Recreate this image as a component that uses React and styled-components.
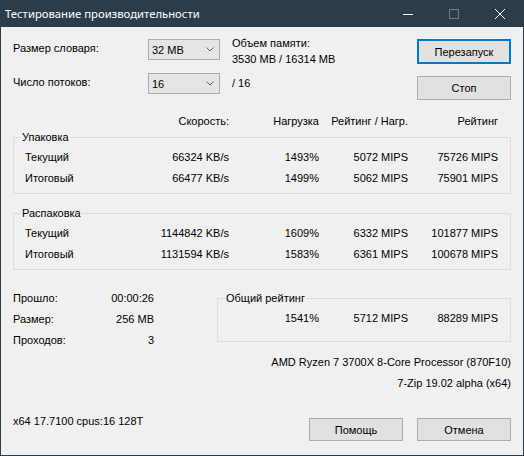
import React from 'react'
import styled, { createGlobalStyle } from 'styled-components'

const GlobalStyle = createGlobalStyle`
    html, body {
        margin: 0;
        padding: 0;
        background: #f0f0f0;
    }
    body {
        font-family: "Liberation Sans", Arial, sans-serif;
        font-size: 11px;
        color: #000;
    }
`

const Window = styled.div`
    width: 524px;
    height: 456px;
    box-sizing: border-box;
    border: 1px solid #2b3d4a;
    border-top: none;
    background: #f0f0f0;
    display: flex;
    flex-direction: column;
`

const TitleBar = styled.div`
    height: 27px;
    background: #2b3d4a;
    display: flex;
    align-items: center;
    color: #fff;
`

const Title = styled.div`
    flex: 1;
    padding-left: 4px;
    font-family: "Segoe UI", "Noto Sans", sans-serif;
    font-size: 11.3px;
`

const CaptionButton = styled.div`
    width: 46px;
    height: 27px;
    display: flex;
    align-items: center;
    justify-content: center;
`

const Body = styled.div`
    flex: 1;
    padding: 0 12px;
    display: flex;
    flex-direction: column;
`

const SettingRow = styled.div`
    display: grid;
    grid-template-columns: 135px 72px 1fr 94px;
    align-items: start;
    margin-top: ${p => p.$top}px;
`

const Label = styled.div`
    line-height: 16px;
    padding-top: ${p => p.$pad || 0}px;
`

const Combo = styled.div`
    height: 21px;
    box-sizing: border-box;
    margin-top: ${p => p.$top || 0}px;
    border: 1px solid #acacac;
    background: #e5e5e5;
    display: flex;
    align-items: center;
    justify-content: space-between;
    padding: 0 5px 0 3px;
`

const Info = styled.div`
    padding-left: 12px;
    line-height: 16px;
    padding-top: ${p => p.$pad || 0}px;
`

const Button = styled.div`
    height: ${p => p.$h || 23}px;
    box-sizing: border-box;
    margin-top: ${p => p.$top || 0}px;
    width: 94px;
    border: ${p => p.$primary ? '2px solid #0078d7' : '1px solid #adadad'};
    background: #e1e1e1;
    display: flex;
    align-items: center;
    justify-content: center;
`

const Cols = styled.div`
    display: grid;
    grid-template-columns: 100px 1fr 90px 89px 90px;
    line-height: ${p => p.$lh || 21}px;
    & > *:not(:first-child) {
        text-align: right;
    }
`

const Header = styled(Cols)`
    margin-top: 13px;
    padding: 0 13px 0 12px;
`

const Group = styled.fieldset`
    margin: ${p => p.$top || 0}px 0 0;
    padding: 2px 12px ${p => p.$bottom || 4}px 11px;
    border: 1px solid #dcdcdc;
    min-width: 0;
`

const Legend = styled.legend`
    padding: 0 1px;
    margin-left: -4px;
    line-height: 16px;
`

const Bottom = styled.div`
    display: flex;
    align-items: flex-start;
    margin-top: 18px;
`

const Stats = styled.div`
    width: 141px;
    display: grid;
    grid-template-columns: 1fr auto;
    line-height: 21px;
    & > :nth-child(even) {
        text-align: right;
    }
`

const Total = styled(Group)`
    margin: 2px 0 0 63px;
    flex: 1;
`

const TotalCols = styled.div`
    display: grid;
    grid-template-columns: 1fr 89px 90px;
    line-height: 21px;
    text-align: right;
`

const RightLine = styled.div`
    text-align: right;
    line-height: 21px;
    margin-top: ${p => p.$top || 0}px;
`

const Footer = styled.div`
    display: flex;
    align-items: flex-start;
    gap: 14px;
    margin-top: 19px;
`

const Version = styled.div`
    flex: 1;
    line-height: 16px;
`

const Chevron = () => (
    <svg width="8" height="5" viewBox="0 0 8 5">
        <path d="M0.5 0.5 L4 4 L7.5 0.5" fill="none" stroke="#606060" strokeWidth="1" />
    </svg>
)

const rows = {
    pack: [
        ['Текущий', '66324 KB/s', '1493%', '5072 MIPS', '75726 MIPS'],
        ['Итоговый', '66477 KB/s', '1499%', '5062 MIPS', '75901 MIPS'],
    ],
    unpack: [
        ['Текущий', '1144842 KB/s', '1609%', '6332 MIPS', '101877 MIPS'],
        ['Итоговый', '1131594 KB/s', '1583%', '6361 MIPS', '100678 MIPS'],
    ],
}

const Rows = ({ data }) => data.map(r => (
    <Cols key={r[0]}>
        {r.map((c, i) => <div key={i}>{c}</div>)}
    </Cols>
))

export default function App() {
    return (
        <Window>
            <GlobalStyle />
            <TitleBar>
                <Title>Тестирование производительности</Title>
                <CaptionButton>
                    <svg width="10" height="10" viewBox="0 0 10 10">
                        <path d="M0 5.5 H10" stroke="#fff" strokeWidth="1" />
                    </svg>
                </CaptionButton>
                <CaptionButton>
                    <svg width="10" height="10" viewBox="0 0 10 10">
                        <rect x="0.5" y="0.5" width="9" height="9" fill="none" stroke="#6f7e89" strokeWidth="1" />
                    </svg>
                </CaptionButton>
                <CaptionButton>
                    <svg width="10" height="10" viewBox="0 0 10 10">
                        <path d="M0 0 L10 10 M10 0 L0 10" stroke="#fff" strokeWidth="1" />
                    </svg>
                </CaptionButton>
            </TitleBar>
            <Body>
                <SettingRow $top={8}>
                    <Label $pad={5}>Размер словаря:</Label>
                    <Combo $top={4}>32 MB<Chevron /></Combo>
                    <Info>Объем памяти:<br />3530 MB / 16314 MB</Info>
                    <Button $primary $h={25} $top={4}>Перезапуск</Button>
                </SettingRow>
                <SettingRow $top={6}>
                    <Label $pad={1}>Число потоков:</Label>
                    <Combo>16<Chevron /></Combo>
                    <Info $pad={2}>/ 16</Info>
                    <Button $h={24} $top={3}>Стоп</Button>
                </SettingRow>
                <Header $lh={16}>
                    <div />
                    <div>Скорость:</div>
                    <div>Нагрузка</div>
                    <div>Рейтинг / Нагр.</div>
                    <div>Рейтинг</div>
                </Header>
                <Group>
                    <Legend>Упаковка</Legend>
                    <Rows data={rows.pack} />
                </Group>
                <Group $top={11}>
                    <Legend>Распаковка</Legend>
                    <Rows data={rows.unpack} />
                </Group>
                <Bottom>
                    <Stats>
                        <div>Прошло:</div><div>00:00:26</div>
                        <div>Размер:</div><div>256 MB</div>
                        <div>Проходов:</div><div>3</div>
                    </Stats>
                    <Total $bottom={12}>
                        <Legend>Общий рейтинг</Legend>
                        <TotalCols>
                            <div>1541%</div>
                            <div>5712 MIPS</div>
                            <div>88289 MIPS</div>
                        </TotalCols>
                    </Total>
                </Bottom>
                <RightLine $top={1}>AMD Ryzen 7 3700X 8-Core Processor (870F10)</RightLine>
                <RightLine>7-Zip 19.02 alpha (x64)</RightLine>
                <Footer>
                    <Version>x64 17.7100 cpus:16 128T</Version>
                    <Button $top={5}>Помощь</Button>
                    <Button $top={5}>Отмена</Button>
                </Footer>
            </Body>
        </Window>
    )
}
